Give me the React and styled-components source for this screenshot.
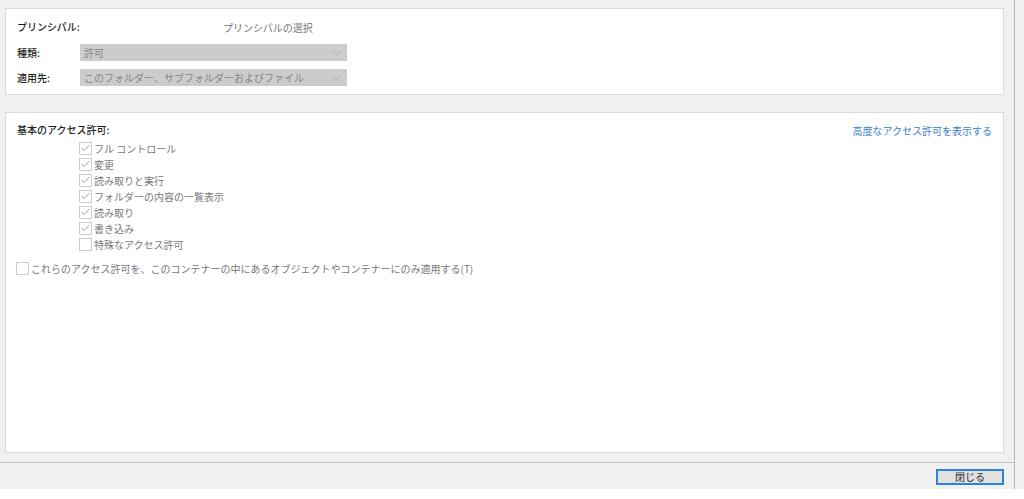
import React from "react";
import styled, { createGlobalStyle } from "styled-components";

const GlobalStyle = createGlobalStyle`
  html, body {
    margin: 0;
    padding: 0;
    background: #ffffff;
  }
  body {
    font-family: "Noto Sans CJK JP", "Noto Sans", sans-serif;
    font-size: 10px;
  }
`;

const Screen = styled.div`
  width: 1024px;
  height: 499px;
  display: flex;
  flex-direction: column;
  background: #ffffff;
  overflow: hidden;
`;

const Top = styled.div`
  display: flex;
  height: 489px;
`;

const Frame = styled.div`
  width: 1014px;
  display: flex;
  flex-direction: column;
  background: #f0f0f0;
  border-right: 1px solid #b9b9b9;
`;

const Gutter = styled.div`
  flex: 1;
  background: #f0f0f0;
`;

const Content = styled.div`
  flex: 1;
  display: flex;
  flex-direction: column;
  gap: 17px;
  padding: 8px 10px 9px 5px;
`;

const Panel = styled.section`
  background: #ffffff;
  border: 1px solid #d9d9d9;
  padding: ${(p) => p.$pad};
  flex: ${(p) => (p.$grow ? 1 : "none")};
  display: flex;
  flex-direction: column;
`;

const Form = styled.div`
  display: grid;
  grid-template-columns: 63px 267px;
  grid-template-rows: 18px 17px 17px;
  row-gap: 8px;
  align-items: center;
`;

const Label = styled.span`
  color: #1e1e1e;
  font-weight: 500;
  line-height: 16px;
  white-space: nowrap;
`;

const Muted = styled.span`
  color: #767676;
  padding-left: 143px;
  white-space: nowrap;
`;

const Select = styled.div`
  height: 17px;
  background: #cccccc;
  display: flex;
  align-items: center;
  justify-content: space-between;
  padding: 0 6px 0 4px;
  color: #858585;
  white-space: nowrap;
`;

const Chevron = () => (
  <svg width="9" height="6" viewBox="0 0 9 6">
    <path d="M0.5 1 L4.5 5 L8.5 1" fill="none" stroke="#aaaaaa" strokeWidth="1" />
  </svg>
);

const HeadRow = styled.div`
  display: flex;
  justify-content: space-between;
  align-items: center;
  height: 16px;
`;

const Link = styled.span`
  color: #3a7cc9;
  white-space: nowrap;
`;

const List = styled.div`
  display: flex;
  flex-direction: column;
  margin: 2px 0 0 ${(p) => p.$indent}px;
`;

const CheckRow = styled.label`
  display: flex;
  align-items: center;
  gap: 2px;
  height: 16px;
  margin-top: ${(p) => p.$top || 0}px;
  margin-left: ${(p) => p.$left || 0}px;
  color: #787878;
  white-space: nowrap;
`;

const Box = styled.span`
  width: 11px;
  height: 11px;
  border: 1px solid #cccccc;
  background: #ffffff;
  display: flex;
  align-items: center;
  justify-content: center;
  flex: none;
`;

const Check = () => (
  <svg width="9" height="8" viewBox="0 0 9 8">
    <path d="M0.8 4 L3.3 6.6 L8.3 1" fill="none" stroke="#a6a6a6" strokeWidth="1" />
  </svg>
);

const Footer = styled.div`
  height: 26px;
  border-top: 1px solid #c4c4c4;
  display: flex;
  align-items: center;
  justify-content: flex-end;
  padding-right: 10px;
`;

const Button = styled.button`
  width: 68px;
  height: 16px;
  box-sizing: border-box;
  border: 2px solid #2b86d9;
  background: #e1e1e1;
  color: #2a2a2a;
  font-family: inherit;
  font-size: 10px;
  line-height: 10px;
  padding: 0;
  margin-top: 1px;
`;

const permissions = [
  { label: "フル コントロール", checked: true },
  { label: "変更", checked: true },
  { label: "読み取りと実行", checked: true },
  { label: "フォルダーの内容の一覧表示", checked: true },
  { label: "読み取り", checked: true },
  { label: "書き込み", checked: true },
  { label: "特殊なアクセス許可", checked: false },
];

export default function App() {
  return (
    <>
      <GlobalStyle />
      <Screen>
        <Top>
          <Frame>
            <Content>
              <Panel $pad="9px 11px 8px 11px">
                <Form>
                  <Label>プリンシパル:</Label>
                  <Muted>プリンシパルの選択</Muted>
                  <Label>種類:</Label>
                  <Select>
                    許可
                    <Chevron />
                  </Select>
                  <Label>適用先:</Label>
                  <Select>
                    このフォルダー、サブフォルダーおよびファイル
                    <Chevron />
                  </Select>
                </Form>
              </Panel>
              <Panel $grow $pad="9px 11px 8px 11px">
                <HeadRow>
                  <Label>基本のアクセス許可:</Label>
                  <Link>高度なアクセス許可を表示する</Link>
                </HeadRow>
                <List $indent={62}>
                  {permissions.map((p) => (
                    <CheckRow key={p.label}>
                      <Box>{p.checked && <Check />}</Box>
                      {p.label}
                    </CheckRow>
                  ))}
                </List>
                <CheckRow $top={8} $left={-1}>
                  <Box />
                  これらのアクセス許可を、このコンテナーの中にあるオブジェクトやコンテナーにのみ適用する(T)
                </CheckRow>
              </Panel>
            </Content>
            <Footer>
              <Button>閉じる</Button>
            </Footer>
          </Frame>
          <Gutter />
        </Top>
      </Screen>
    </>
  );
}
